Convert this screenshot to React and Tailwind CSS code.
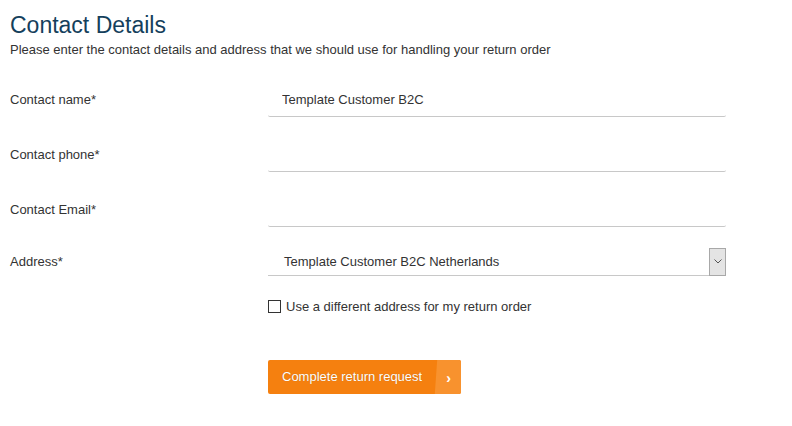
import React from "react";

const fields = [
  { label: "Contact name*", value: "Template Customer B2C" },
  { label: "Contact phone*", value: "" },
  { label: "Contact Email*", value: "" },
];

function App() {
  return (
    <div className="min-h-screen bg-white pl-[10px] pt-[10px] font-['Liberation_Sans',Arial,sans-serif] text-[#333]">
      <h1 className="text-[23px] leading-[31px] text-[#153f5c]">Contact Details</h1>
      <p className="text-[13px] leading-[17px] text-[#333]">
        Please enter the contact details and address that we should use for handling your return order
      </p>

      <div className="mt-[25px] flex flex-col gap-[21px]">
        {fields.map((f) => (
          <div key={f.label} className="flex items-center">
            <label className="w-[258px] text-[13px]">{f.label}</label>
            <input
              type="text"
              defaultValue={f.value}
              className="h-[34px] w-[458px] border-b border-[#c8c8c8] pl-[14px] text-[13px] text-[#333] outline-none rounded-b-[2px]"
            />
          </div>
        ))}

        <div className="flex items-center">
          <label className="w-[258px] text-[13px]">Address*</label>
          <div className="flex h-[28px] w-[458px] items-center border-b border-[#c8c8c8]">
            <span className="flex-1 pl-[16px] text-[13px]">Template Customer B2C Netherlands</span>
            <span className="flex h-[28px] w-[17px] items-center justify-center border border-[#a8a8a8] bg-[#e4e4e4]">
              <svg width="8" height="5" viewBox="0 0 8 5" fill="none">
                <path d="M0.5 0.5L4 4L7.5 0.5" stroke="#555" strokeWidth="1" />
              </svg>
            </span>
          </div>
        </div>
      </div>

      <div className="ml-[258px] mt-[21px] flex items-center gap-[5px]">
        <span className="h-[13px] w-[13px] border border-[#333] bg-white"></span>
        <span className="text-[13px]">Use a different address for my return order</span>
      </div>

      <div className="ml-[258px] mt-[43px]">
        <button className="relative flex h-[34px] w-[193px] items-center overflow-hidden rounded-[2px] bg-[#f5800f] text-white">
          <span className="pl-[14px] text-[13px] [text-shadow:0_0_1px_rgba(0,0,0,0.25)]">Complete return request</span>
          <span className="absolute -right-[2px] top-0 h-full w-[27px] -skew-x-[4deg] bg-[#f8922e]"></span>
          <span className="absolute right-[10px] top-[8px] text-[14px] font-bold">›</span>
        </button>
      </div>
    </div>
  );
}

export default App;
